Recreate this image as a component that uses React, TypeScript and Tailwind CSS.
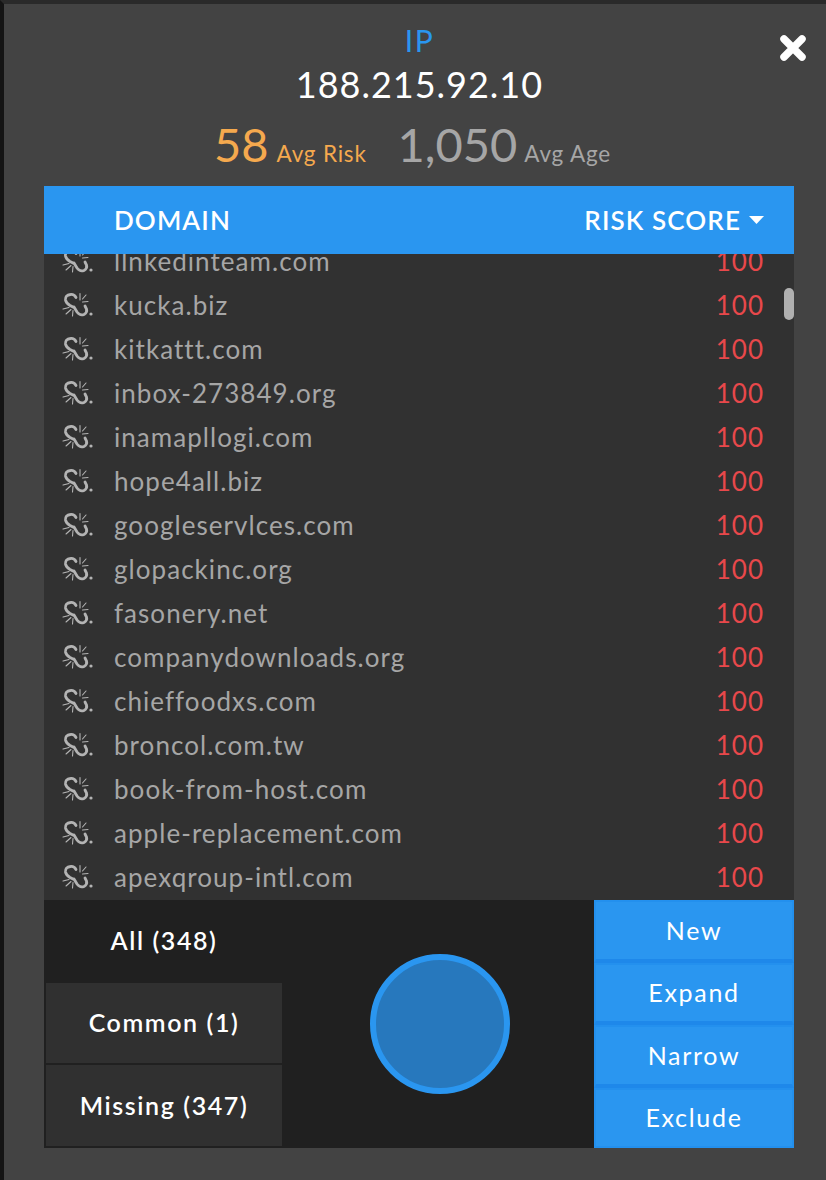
import React from "react";

const domains = [
  "llnkedinteam.com",
  "kucka.biz",
  "kitkattt.com",
  "inbox-273849.org",
  "inamapllogi.com",
  "hope4all.biz",
  "googleservlces.com",
  "glopackinc.org",
  "fasonery.net",
  "companydownloads.org",
  "chieffoodxs.com",
  "broncol.com.tw",
  "book-from-host.com",
  "apple-replacement.com",
  "apexqroup-intl.com",
];

const BrokenLink = () => (
  <svg width="36" height="32" viewBox="0 0 36 32" fill="none" stroke="#b4b4b4" strokeLinecap="round">
    <path d="M16 8.5 Q14 5 10.5 5.5 Q5 6 5.5 11 Q6 14 10 16.5 L13 18" strokeWidth="2.8" />
    <path d="M14 18 L17 23 Q20 27 24 25.5 Q27.5 23.5 26.5 20 L25 17" strokeWidth="2.8" />
    <path d="M20 4.5 L20 11 M26 6 L22.5 10 M28 12.5 L22.5 13 M3 20 L9 18.5 M6 25 L11 20.5 M12.5 27 L13 21.5" strokeWidth="1.1" />
    <circle cx="31" cy="25" r="1.6" fill="#b4b4b4" stroke="none" />
  </svg>
);

const Row = ({ name }: { name: string }) => (
  <div className="flex h-11 shrink-0 items-center pl-[16px] pr-[30px]">
    <span className="flex w-[54px] shrink-0 items-center">
      <BrokenLink />
    </span>
    <span className="flex-1 text-[26px] tracking-[1.05px] text-[#a6a6a6]">{name}</span>
    <span className="text-[26px] tracking-[1px] text-[#e8484b]">100</span>
  </div>
);

const FilterButton = ({ label, active }: { label: string; active?: boolean }) => (
  <button
    className={`flex flex-1 items-center justify-center text-[25px] font-semibold tracking-[1.6px] text-white ${
      active ? "bg-[#202020]" : "bg-[#303030]"
    }`}
  >
    {label}
  </button>
);

const ActionButton = ({ label }: { label: string }) => (
  <button className="flex flex-1 items-center justify-center border-2 border-b-4 border-[#2390ee] border-b-[#1e88ea] bg-[#2a96f0] text-[25px] tracking-[1.7px] text-white last:border-b-2 last:border-b-[#2390ee]">
    {label}
  </button>
);

export default function App() {
  return (
    <div
      className="flex h-[1180px] w-[826px] flex-col overflow-hidden border-t-4 border-l-4 border-t-[#2a2a2a] border-l-[#141414] bg-[#434343]"
      style={{ fontFamily: "Lato, 'Open Sans', sans-serif" }}
    >
      <div className="relative flex h-[182px] flex-col items-center pl-[9px]">
        <div className="mt-[16px] text-[30px] leading-[40px] tracking-[1.5px] text-[#2a96f0]">IP</div>
        <div className="mt-[1px] text-[36px] leading-[46px] tracking-[1px] text-white">188.215.92.10</div>
        <div className="mt-[7px] mr-[14px] flex items-baseline">
          <span className="text-[47px] leading-[60px] text-[#f5a94e]">58</span>
          <span className="ml-[8px] text-[22.5px] tracking-[0.8px] text-[#f5a94e]">Avg Risk</span>
          <span className="ml-[31px] text-[47px] leading-[60px] text-[#a6a6a6]">1,050</span>
          <span className="ml-[7px] text-[22.5px] tracking-[0.8px] text-[#a6a6a6]">Avg Age</span>
        </div>
        <svg className="absolute top-[30px] left-[775px]" width="28" height="28" viewBox="0 0 28 28" fill="none">
          <path d="M5 5 L23 23 M23 5 L5 23" stroke="#fff" strokeWidth="7.5" strokeLinecap="round" />
        </svg>
      </div>

      <div className="ml-10 flex h-[962px] w-[750px] flex-col">
        <div className="z-10 flex h-[68px] shrink-0 items-center justify-between bg-[#2a96f0] pr-[30px] pl-[70px] text-[26px] font-semibold tracking-[1.1px] text-white">
          <span>DOMAIN</span>
          <span className="flex items-center gap-2">
            RISK SCORE
            <svg width="15" height="8" viewBox="0 0 15 8">
              <path d="M0 0 H15 L7.5 8 Z" fill="#fff" />
            </svg>
          </span>
        </div>

        <div className="relative h-[646px] shrink-0 overflow-hidden bg-[#313131]">
          <div className="-mt-[15px] flex flex-col">
            {domains.map((d) => (
              <Row key={d} name={d} />
            ))}
          </div>
          <div className="absolute top-[34px] right-0 h-[32px] w-[10px] rounded-[5px] bg-[#b0b0b0]" />
        </div>

        <div className="flex h-[248px] shrink-0 bg-[#202020]">
          <div className="flex w-[240px] shrink-0 flex-col gap-[2px] px-[2px] pb-[2px]">
            <FilterButton label="All (348)" active />
            <FilterButton label="Common (1)" />
            <FilterButton label="Missing (347)" />
          </div>
          <div className="flex flex-1 items-center justify-center pl-[2px]">
            <div className="h-[140px] w-[140px] rounded-full border-[6px] border-[#2a96f0] bg-[#2778bd]" />
          </div>
          <div className="flex w-[200px] shrink-0 flex-col">
            <ActionButton label="New" />
            <ActionButton label="Expand" />
            <ActionButton label="Narrow" />
            <ActionButton label="Exclude" />
          </div>
        </div>
      </div>
    </div>
  );
}
